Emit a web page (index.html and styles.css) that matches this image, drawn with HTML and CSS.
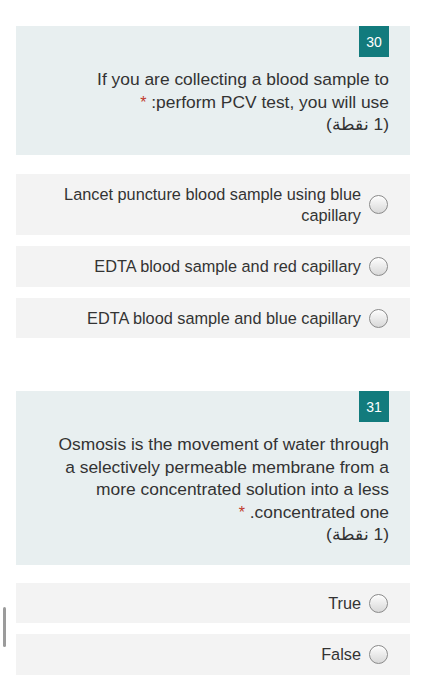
FILE: index.html
```html
<!DOCTYPE html>
<html lang="ar" dir="rtl">
<head>
<meta charset="utf-8">
<link rel="stylesheet" href="styles.css">
</head>
<body>
<div class="page">
  <section class="card">
    <div class="badge">30</div>
    <div class="qtext">If you are collecting a blood sample to perform PCV test, you will use: <span class="req">*</span></div>
    <div class="qtext">(1 نقطة)</div>
  </section>
  <div class="options first">
    <div class="option"><span class="radio"></span><span class="otext">Lancet puncture blood sample using blue capillary</span></div>
    <div class="option"><span class="radio"></span><span class="otext">EDTA blood sample and red capillary</span></div>
    <div class="option"><span class="radio"></span><span class="otext">EDTA blood sample and blue capillary</span></div>
  </div>
  <section class="card second">
    <div class="badge">31</div>
    <div class="qtext">Osmosis is the movement of water through a selectively permeable membrane from a more concentrated solution into a less concentrated one. <span class="req">*</span></div>
    <div class="qtext">(1 نقطة)</div>
  </section>
  <div class="options">
    <div class="option"><span class="radio"></span><span class="otext">True</span></div>
    <div class="option"><span class="radio"></span><span class="otext">False</span></div>
  </div>
</div>
<div class="scroll-thumb"></div>
</body>
</html>
```

FILE: styles.css
```css
html, body {
  margin: 0;
  padding: 0;
  background: #ffffff;
  overflow: hidden;
}
body {
  font-family: "Liberation Sans", Arial, "Noto Sans", sans-serif;
  color: #333333;
}
.page {
  padding: 26px 17px 0 16px;
  display: flex;
  flex-direction: column;
}
.card {
  background: #e8eff0;
  padding: 0 21px 19px 34px;
  display: flex;
  flex-direction: column;
  align-items: flex-start;
}
.card.second {
  margin-top: 53px;
}
.badge {
  width: 30px;
  height: 31px;
  background: #127b7d;
  color: #ffffff;
  font-size: 14px;
  display: flex;
  align-items: center;
  justify-content: center;
  margin-bottom: 11px;
}
.qtext {
  font-size: 17.4px;
  line-height: 22.5px;
  text-align: right;
}
.req {
  display: inline-block;
  color: #c0392b;
  font-size: 16px;
  line-height: 15px;
  vertical-align: 0;
}
.options {
  margin-top: 18px;
  display: flex;
  flex-direction: column;
  gap: 11px;
}
.options.first {
  margin-top: 19px;
}
.option {
  background: #f3f3f3;
  padding: 10px 22px 9.5px 21px;
  display: flex;
  align-items: center;
  gap: 8px;
}
.otext {
  font-size: 16.3px;
  line-height: 21px;
  text-align: right;
}
.radio {
  flex: none;
  width: 17px;
  height: 17px;
  border: 1px solid #8a8a8a;
  border-radius: 50%;
  background: linear-gradient(#fdfdfd, #d8d8d8);
  box-shadow: inset 0 1px 1px rgba(255,255,255,0.8);
}
.scroll-thumb {
  position: absolute;
  left: 3px;
  top: 607px;
  width: 3px;
  height: 40px;
  border-radius: 2px;
  background: #9b9b9b;
}
```
